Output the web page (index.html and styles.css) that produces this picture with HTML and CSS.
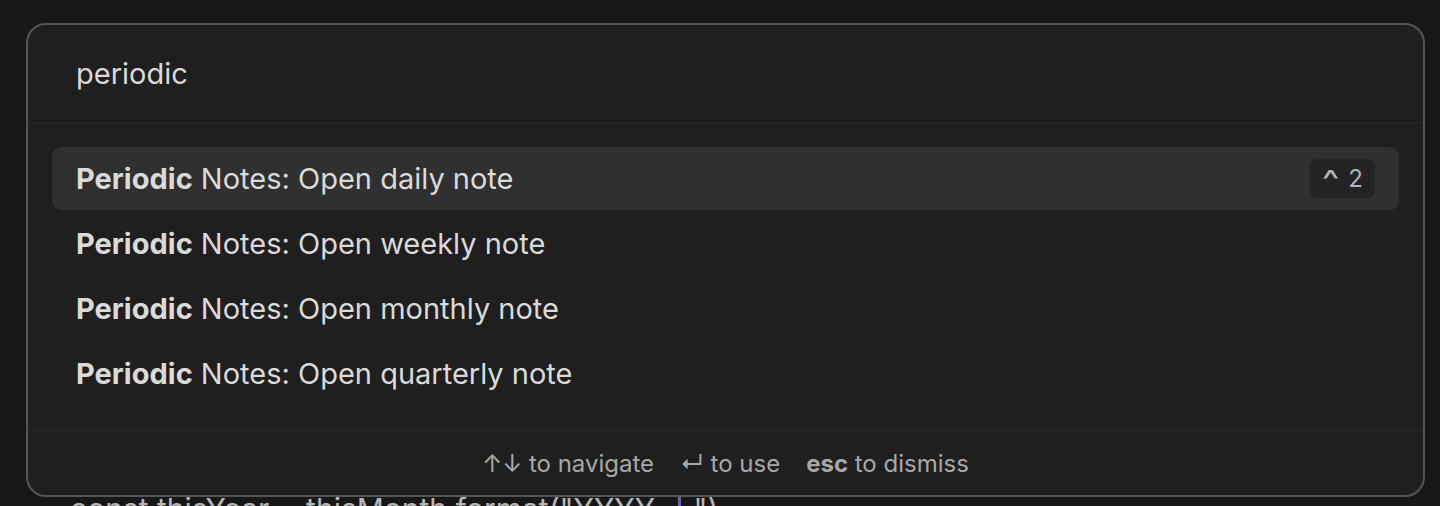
FILE: index.html
```html
<!DOCTYPE html>
<html>
<head>
<meta charset="utf-8">
<link rel="stylesheet" href="styles.css">
</head>
<body>
<div class="editor">
  <div class="code-line">const thisYear = thisMonth.format("YYYY-<span class="cursor"></span>")</div>
</div>
<div class="modal">
  <div class="prompt">
    <div class="prompt-input">periodic</div>
  </div>
  <div class="results">
    <div class="result selected">
      <span class="result-title"><b>Periodic</b> Notes: Open daily note</span>
      <span class="hotkey"><span class="caret">^</span> 2</span>
    </div>
    <div class="result">
      <span class="result-title"><b>Periodic</b> Notes: Open weekly note</span>
    </div>
    <div class="result">
      <span class="result-title"><b>Periodic</b> Notes: Open monthly note</span>
    </div>
    <div class="result">
      <span class="result-title"><b>Periodic</b> Notes: Open quarterly note</span>
    </div>
  </div>
  <div class="instructions">
    <div class="instruction"><span class="cmd">↑↓</span> to navigate</div>
    <div class="instruction"><span class="cmd">↵</span> to use</div>
    <div class="instruction"><b>esc</b> to dismiss</div>
  </div>
</div>
</body>
</html>
```
FILE: styles.css
```css
html, body {
  margin: 0;
  padding: 0;
  background: #171717;
  font-family: Inter, "Noto Sans", sans-serif;
  overflow: hidden;
  height: 506px;
}

.editor {
  padding: 489px 0 0 70px;
}

.code-line {
  font-size: 30px;
  line-height: 40px;
  color: #b8b8b8;
  white-space: pre;
}

.cursor {
  display: inline-block;
  width: 3px;
  height: 30px;
  background: #6c5bb8;
  margin: 0 12px;
}

.modal {
  position: absolute;
  top: 23px;
  left: 26px;
  width: 1395px;
  height: 470px;
  background: #1f1f1f;
  border: 2px solid #555555;
  border-radius: 20px;
  display: flex;
  flex-direction: column;
  box-sizing: content-box;
}

.prompt {
  height: 97px;
  border-bottom: 1px solid #2a2a2a;
  display: flex;
  align-items: center;
  padding: 0 48px;
}

.prompt-input {
  font-size: 29px;
  color: #dadada;
}

.results {
  flex: 1;
  padding: 24px 24px 0 24px;
  display: flex;
  flex-direction: column;
  gap: 2px;
}

.result {
  height: 63px;
  display: flex;
  align-items: center;
  justify-content: space-between;
  padding: 0 24px;
  border-radius: 9px;
  font-size: 29px;
  color: #dadada;
}

.result.selected {
  background: #303030;
}

.result-title b {
  font-weight: 700;
}

.hotkey {
  background: #232323;
  color: #b3b3b3;
  font-size: 24px;
  border-radius: 7px;
  padding: 0 12px 0 14px;
  height: 39px;
  line-height: 39px;
  display: flex;
  align-items: center;
  gap: 11px;
}

.caret {
  font-size: 28px;
  transform: scaleX(1.35);
  display: inline-block;
  margin-top: 3px;
}

.instructions {
  height: 64px;
  border-top: 1px solid #2a2a2a;
  display: flex;
  justify-content: center;
  align-items: center;
  gap: 26px;
  color: #a8a8a8;
  font-size: 24px;
}

.instruction b {
  font-weight: 700;
}
```
